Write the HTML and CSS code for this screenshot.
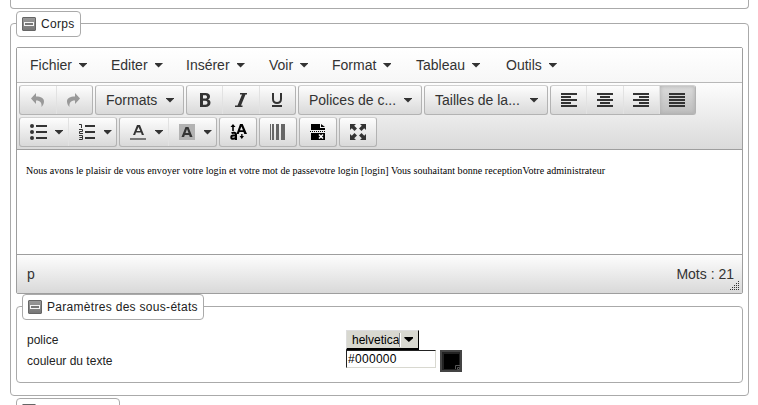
FILE: index.html
```html
<!DOCTYPE html>
<html lang="fr">
<head>
<meta charset="utf-8">
<title>Corps</title>
<link rel="stylesheet" href="styles.css">
</head>
<body>
<section class="panel previous"></section>
<section class="panel corps">
  <h2 class="legend"><i class="toggle"></i>Corps</h2>
  <div class="editor">
    <nav class="menubar">
      <span class="menu m1">Fichier<i class="caret"></i></span>
      <span class="menu m2">Editer<i class="caret"></i></span>
      <span class="menu m3">Insérer<i class="caret"></i></span>
      <span class="menu m4">Voir<i class="caret"></i></span>
      <span class="menu m5">Format<i class="caret"></i></span>
      <span class="menu m6">Tableau<i class="caret"></i></span>
      <span class="menu">Outils<i class="caret"></i></span>
    </nav>
    <div class="toolbar">
      <div class="row">
        <div class="group history">
          <span class="btn"><svg class="faded" width="16" height="16" viewBox="0 0 16 16"><path d="M6 1v3.500c5 0 8 1.500 8 5 0 2-1 4-2.500 5.500C12 11 10.500 8.500 6 8.500V12L1 6.500z"/></svg></span>
          <span class="btn"><svg class="faded" width="16" height="16" viewBox="0 0 16 16"><path d="M9 1v3.500c-5 0-8 1.500-8 5 0 2 1 4 2.500 5.500C3 11 4.500 8.500 9 8.500V12l5-5.500z"/></svg></span>
        </div>
        <div class="group list formats"><span>Formats</span><i class="caret"></i></div>
        <div class="group style">
          <span class="btn"><svg width="16" height="16" viewBox="0 0 16 16"><path fill-rule="evenodd" d="M3 1h5.500c3 0 4.500 1.300 4.500 3.500 0 1.500-.8 2.500-2 3 1.500.4 2.500 1.500 2.500 3.300C13.500 13.500 11.500 15 8.500 15H3zM6 3.200v3.400h2c1.400 0 2-.6 2-1.700s-.7-1.700-2-1.700zM6 8.800v4h2.300c1.500 0 2.200-.8 2.200-2s-.8-2-2.300-2z"/></svg></span>
          <span class="btn"><svg width="16" height="16" viewBox="0 0 16 16"><path d="M7 1h7v1.500h-1.500L8 13.500h1.500V15H2v-1.500h2.500l4.500-11H7z"/></svg></span>
          <span class="btn"><svg width="16" height="16" viewBox="0 0 16 16"><path d="M3 1h2v6c0 2.200 1 3 3 3s3-.8 3-3V1h2v6c0 3.300-2 5-5 5S3 10.300 3 7zM3 13h10v2H3z"/></svg></span>
        </div>
        <div class="group list wide"><span>Polices de c...</span><i class="caret"></i></div>
        <div class="group list wide"><span>Tailles de la...</span><i class="caret"></i></div>
        <div class="group align">
          <span class="btn"><svg width="16" height="16" viewBox="0 0 16 16"><path d="M0 1h16v2H0zM0 4h10v2H0zM0 7h16v2H0zM0 10h10v2H0zM0 13h16v2H0z"/></svg></span>
          <span class="btn"><svg width="16" height="16" viewBox="0 0 16 16"><path d="M0 1h16v2H0zM3 4h10v2H3zM0 7h16v2H0zM3 10h10v2H3zM0 13h16v2H0z"/></svg></span>
          <span class="btn"><svg width="16" height="16" viewBox="0 0 16 16"><path d="M0 1h16v2H0zM6 4h10v2H6zM0 7h16v2H0zM6 10h10v2H6zM0 13h16v2H0z"/></svg></span>
          <span class="btn active"><svg width="16" height="16" viewBox="0 0 16 16"><path d="M0 1h16v2H0zM0 4h16v2H0zM0 7h16v2H0zM0 10h16v2H0zM0 13h16v2H0z"/></svg></span>
        </div>
      </div>
      <div class="row">
        <div class="group split">
          <span class="btn"><svg width="17" height="16" viewBox="0 0 17 16"><circle cx="2" cy="2" r="2"/><circle cx="2" cy="8" r="2"/><circle cx="2" cy="14" r="2"/><path d="M6 1h11v2H6zM6 7h11v2H6zM6 13h11v2H6z"/></svg><i class="caret"></i></span>
          <span class="btn"><svg width="17" height="16" viewBox="0 0 17 16"><path d="M6 1h10v2H6zM6 7h10v2H6zM6 13h10v2H6z"/><path class="line" d="M0 .5h2.500V4M0 5.500h3.500v2H.5v2H4M0 11.500h3.500v4H0M.5 13.500h3"/></svg><i class="caret"></i></span>
        </div>
        <div class="group split">
          <span class="btn"><svg width="17" height="16" viewBox="0 0 17 16"><path fill-rule="evenodd" d="M7 1h3l4 10h-2.200l-.8-2.500H6L5.200 11H3zM8.500 3L6.700 7h3.600z"/><path class="bar" d="M0 14h16v2H0z"/></svg><i class="caret"></i></span>
          <span class="btn"><svg width="17" height="16" viewBox="0 0 17 16"><path class="swatch" d="M0 0h16v16H0z"/><path fill-rule="evenodd" d="M6.500 3h3l4 10h-2.700l-.7-2H5.800l-.7 2H2.500zM8 5L6.500 9h3z"/></svg><i class="caret"></i></span>
        </div>
        <div class="group single"><svg class="black" width="17" height="16" viewBox="0 0 17 16"><path fill-rule="evenodd" d="M10 0h2.700L17 10h-2.700l-.8-2h-4L8.700 10H6.500zM11.400 2.500L10 6.200h3zM3 0l2.500 3H3.800v4H2.200V3H.5zM11.200 10h1.300v2H14l-2.200 3-2.200-3h1.600z"/><path class="letter" d="M1.500 9.200C3 8.500 6 8.300 6 10.500V16M6 11.500H3c-2.300 0-2.300 3.300 0 3.300 1.500 0 3-.8 3-2"/></svg></div>
        <div class="group single"><svg width="16" height="16" viewBox="0 0 16 16"><path class="codebar" d="M0 0h1v16H0zM2 0h2v16H2zM6 0h3v16H6zM11 0h4v16h-4z"/></svg></div>
        <div class="group single"><svg class="black" width="16" height="16" viewBox="0 0 16 16"><path d="M1 0h9v4h5v2H1zM11 0l4 3h-4zM0 7h1v1H0zM2 7h1v1H2zM4 7h1v1H4zM6 7h1v1H6zM8 7h1v1H8zM10 7h1v1h-1zM12 7h1v1h-1zM14 7h1v1h-1zM1 9h14v7H1z"/><path class="cross" d="M9 10.500l4 4M13 10.500l-4 4"/></svg></div>
        <div class="group single"><svg width="16" height="16" viewBox="0 0 16 16"><path d="M0 0h6L4.200 1.800 7 4.500 4.500 7 1.800 4.200 0 6zM16 0v6l-1.800-1.800L11.500 7 9 4.500l2.800-2.700L10 0zM0 16v-6l1.800 1.800L4.500 9 7 11.500l-2.800 2.700L6 16zM16 16h-6l1.800-1.800L9 11.500 11.500 9l2.700 2.800L16 10z"/></svg></div>
      </div>
    </div>
    <div class="content"><p>Nous avons le plaisir de vous envoyer votre login et votre mot de passevotre login [login] Vous souhaitant bonne receptionVotre administrateur</p></div>
    <div class="statusbar"><span>p</span><span>Mots : 21</span>
      <svg class="grip" width="10" height="10" viewBox="0 0 10 10"><path d="M8 0h1v1H8zM6 2h1v1H6zM8 2h1v1H8zM4 4h1v1H4zM6 4h1v1H6zM8 4h1v1H8zM2 6h1v1H2zM4 6h1v1H4zM6 6h1v1H6zM8 6h1v1H8zM0 8h1v1H0zM2 8h1v1H2zM4 8h1v1H4zM6 8h1v1H6zM8 8h1v1H8z"/></svg>
    </div>
  </div>
  <section class="panel params">
    <h2 class="legend"><i class="toggle"></i>Paramètres des sous-états</h2>
    <div class="fields">
      <span class="label">police</span>
      <span class="select">helvetica<i class="divider"></i><i class="caret"></i></span>
      <span class="label">couleur du texte</span>
      <span class="color"><span class="input">#000000</span><svg width="22" height="22" viewBox="0 0 22 22"><path fill="#444" d="M0 0h22v22H0z"/><path fill="#222" d="M2 2h18v18H2z"/><path fill="#000" d="M4 4h15v15H4z"/><path fill="none" stroke="#555" d="M15.500 19v-3.500H20M17.500 17.500h2v2h-2z"/></svg></span>
    </div>
  </section>
</section>
<h2 class="legend next"><i class="toggle"></i></h2>
</body>
</html>
```
FILE: styles.css
```css
*, *::before { box-sizing: border-box; }
html, body { height: 100%; }
body {
  margin: 0;
  padding: 0 9px 0 10px;
  overflow: hidden;
  background: #fff;
  color: #222;
  font: 12px/14px "Liberation Sans", Arial, sans-serif;
}
.panel { border: 1px solid #aaa; border-radius: 4px; }
.previous { height: 9px; border-top: 0; border-radius: 0 0 4px 4px; }
.corps { height: 373px; margin-top: 14px; padding: 0 5px; }
.legend {
  display: flex;
  align-items: center;
  width: max-content;
  height: 26px;
  margin: -13px 0 0;
  padding: 0 5px;
  gap: 5px;
  border: 1px solid #aaa;
  border-radius: 4px;
  background: #fff;
  font-size: 12px;
  font-weight: normal;
  letter-spacing: .3px;
}
.toggle {
  display: flex;
  align-items: center;
  justify-content: center;
  width: 14px;
  height: 14px;
  border: 1px solid #666;
  border-radius: 1px;
  background: linear-gradient(#999, #777);
}
.toggle::before { content: ""; width: 10px; height: 4px; border: 1px solid #f4f4f4; background: #777; }
.editor {
  height: 247px;
  margin-top: 10px;
  border: 1px solid #9e9e9e;
  border-radius: 2px;
  color: #333;
  font-size: 14px;
}
.caret { flex: none; width: 8px; height: 5px; background: #333; clip-path: polygon(0 0, 100% 0, 100% 1px, 50% 100%, 0 1px); }
.menubar {
  display: flex;
  align-items: center;
  height: 35px;
  padding-left: 13px;
  border-bottom: 1px solid #b8b8b8;
  background: linear-gradient(#fff, #f7f7f7);
}
.menu { display: flex; align-items: center; gap: 7px; }
.m1 { width: 81px; }
.m2 { width: 75px; }
.m3 { width: 83px; }
.m4 { width: 63px; }
.m5 { width: 84px; }
.m6 { width: 90px; }
.toolbar {
  display: flex;
  flex-direction: column;
  gap: 2px;
  height: 67px;
  padding: 2px;
  border-bottom: 1px solid #9e9e9e;
  background: linear-gradient(#fdfdfd, #dadada);
}
.row { display: flex; gap: 2px; }
.group {
  display: flex;
  height: 30px;
  overflow: hidden;
  border: 1px solid #b3b3b3;
  border-top-color: #d0d0d0;
  border-radius: 3px;
  background: linear-gradient(#fdfdfd, #d9d9d9);
}
.history { width: 74px; }
.formats { width: 89px; }
.style { width: 110px; }
.wide { width: 124px; }
.align { width: 146px; }
.split { width: 98px; }
.single { width: 38px; align-items: center; justify-content: center; }
.list { align-items: center; justify-content: space-between; padding: 0 9px 0 10px; }
.btn { display: flex; flex: 1; align-items: center; justify-content: center; }
.btn + .btn { border-left: 1px solid #e2e2e2; }
.split .btn { justify-content: flex-start; gap: 8px; padding-left: 10px; }
.active { background: linear-gradient(#dcdcdc, #bebebe); box-shadow: inset 0 0 4px #aaa; }
svg { flex: none; fill: #333; }
.faded { fill: #999; }
.black { fill: #000; }
.line { fill: none; stroke: #333; }
.bar { fill: #777; }
.swatch { fill: #b3b3b3; }
.letter { fill: none; stroke: #000; stroke-width: 2; }
.codebar { fill: #666; }
.cross { stroke: #fff; stroke-width: 1.5; }
.content {
  height: 104px;
  padding: 14px 9px;
  color: #000;
  font: 10px/14px "Liberation Serif", "Times New Roman", serif;
  letter-spacing: .045px;
  white-space: nowrap;
}
.content p { margin: 0; }
.statusbar {
  position: relative;
  display: flex;
  align-items: center;
  justify-content: space-between;
  height: 39px;
  padding: 0 8px 0 10px;
  border-top: 1px solid #9e9e9e;
  background: linear-gradient(#fdfdfd, #d9d9d9);
}
.grip { position: absolute; right: 2px; bottom: 2px; }
.params { height: 77px; margin-top: 12px; padding: 0 5px; }
.fields {
  display: grid;
  grid-template-columns: 319px 1fr;
  grid-template-rows: 20px 22px;
  padding: 10px 0 0 5px;
}
.label { align-self: center; }
.select {
  display: flex;
  align-items: center;
  width: 73px;
  height: 20px;
  padding-left: 5px;
  border: 1px solid;
  border-color: #ddd #000 #000 #ddd;
  border-bottom-width: 2px;
  background: #d8d8d0;
  color: #000;
}
.divider { width: 2px; height: 14px; border-left: 1px solid #888; border-right: 1px solid #fff; }
.select .caret { width: 9px; margin-left: 3px; background: #000; }
.color { display: flex; gap: 4px; }
.input {
  width: 90px;
  height: 18px;
  padding-left: 1px;
  border: 1px solid;
  border-color: #222 #d8d8d0 #d8d8d0 #222;
  color: #000;
  line-height: 16px;
  letter-spacing: .3px;
}
.next { width: 104px; margin: 2px 0 0 6px; }
```
